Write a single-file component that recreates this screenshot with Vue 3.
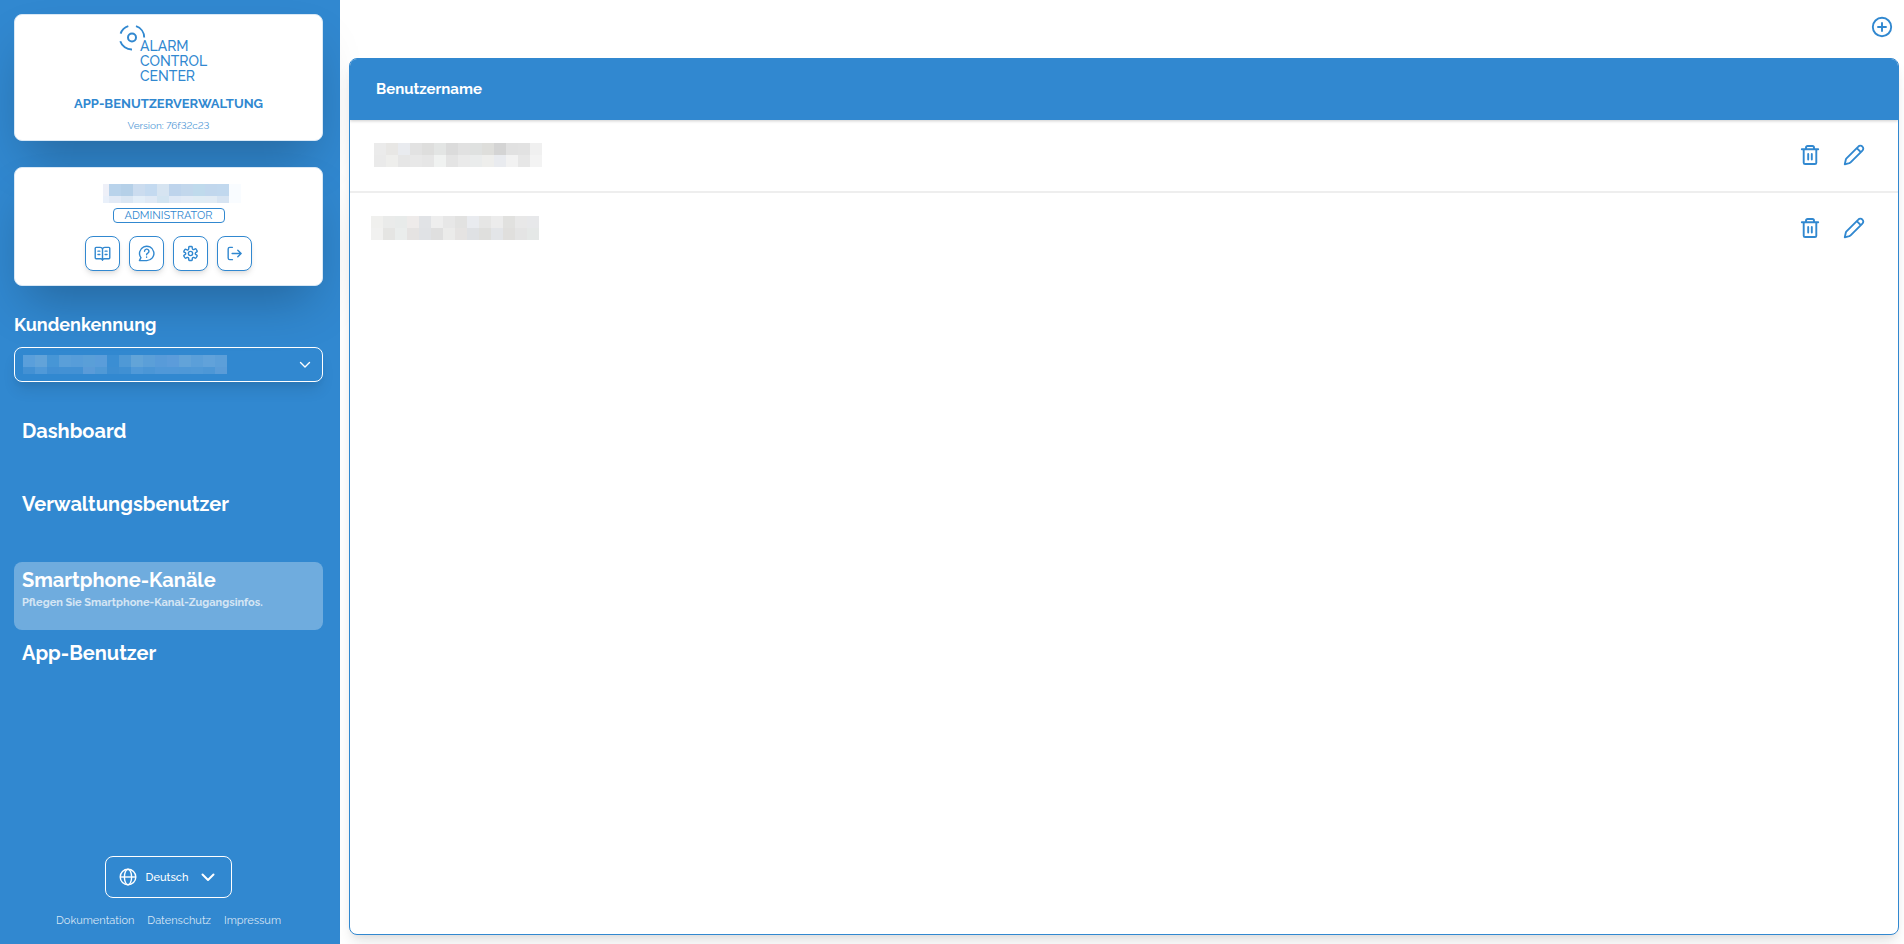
<script setup>
import { h, ref } from 'vue'

const CELL = 12

// Draws a redacted text as rows of coloured blocks.
const Mosaic = (props) => {
  const rows = props.rows.map((r) => r.split(' '))
  const lead = props.lead || CELL
  const tail = props.tail || CELL
  const width = lead + CELL * (rows[0].length - 1)
  const height = CELL * (rows.length - 1) + tail
  const rects = rows.flatMap((cells, y) =>
    cells.map((c, x) =>
      h('rect', {
        x: x === 0 ? 0 : lead + (x - 1) * CELL,
        y: y * CELL,
        width: x === 0 ? lead : CELL,
        height: y === rows.length - 1 ? tail : CELL,
        fill: '#' + c
      })
    )
  )
  return h('svg', { width, height, 'aria-hidden': 'true', 'shape-rendering': 'crispEdges' }, rects)
}
Mosaic.props = ['rows', 'lead', 'tail']

const userName = [
  'eef0f8 b9d3eb b5d0e8 cbdcef c4daf0 d6e4f1 bed4ec c2d7ec bfdaec c1d7ed c1d8ee f9fcff',
  'e9f0fa e2eaf6 dae6f3 e3eef8 dfe9f5 d2e4f1 dfe9f6 e2ebf6 e0ecf4 e1ebf4 d7e4f2 f9fcff'
]
const customer = [
  '5a9fdb 62a3d9 4796d6 5a9fd9 579dd9 5a9fd8 5a9dda 3b8ed3 4f99d6 62a4d8 5b9fd8 589bd9 5c9cda 62a3d9 5b9fd9 61a2da 5c9fd9',
  '4391d4 5099d8 4290d4 4391d4 4391d4 5a9bd8 5099d6 3d8ed2 4090d3 5099d8 4b96d6 5098d8 5098d8 4f98d7 5099d7 4d97d6 5a9cd8'
]
const channels = [
  {
    id: 1,
    name: [
      'ebebeb e8e7e5 e9ebef e2e2e2 dededd e3e5e4 dbdbdb e1e1e1 dfe1e0 dededb d4d4d4 e1e1e1 e2e2e2 f0f0f0',
      'eaeaea eeeeec e6e6e6 e8e8e8 e6e6e6 f0f2f1 e4e4e4 eaeaea eaecec eeeeec e9ebef f2f2f2 e7e7e7 f3f3f3'
    ]
  },
  {
    id: 2,
    name: [
      'f0f0ee eaebea e8ebea eeebea e1e3e6 eeeeee e7e7e7 e2e2e1 e9ebef e6e6e5 ececec e1e1df e8e8e8 e7e8ea',
      'f1f1f0 e5e5e3 eaedec e5e3e2 e0e2e5 dfdfdf ebebea e5e3e2 dfe1e4 dfdfdd e3e5e8 e0dfdd e4e4e4 e5e8e7'
    ]
  }
]

const navGroups = [
  [{ title: 'Dashboard' }, { title: 'Verwaltungsbenutzer' }],
  [
    { title: 'Smartphone-Kanäle', text: 'Pflegen Sie Smartphone-Kanal-Zugangsinfos.' },
    { title: 'App-Benutzer' }
  ]
]
const active = ref('Smartphone-Kanäle')
const footerLinks = ['Dokumentation', 'Datenschutz', 'Impressum']
</script>

<template>
  <div class="app">
    <aside class="sidebar">
      <section class="card brand">
        <svg class="logo" width="90" height="60" viewBox="0 0 90 60" role="img" aria-label="Alarm Control Center">
          <g fill="none" stroke="currentColor">
            <circle cx="13" cy="13.500" r="4" stroke-width="2" />
            <path d="M1.600 9.600A12 12 0 0 1 9.300 2.100M17 2.200A12 12 0 0 1 25.200 13.500M1.300 17.200A12 12 0 0 0 13 25.500" stroke-width="1.900" />
          </g>
          <g class="logo-text">
            <text x="21" y="27">ALARM</text>
            <text x="21" y="42">CONTROL</text>
            <text x="21" y="57">CENTER</text>
          </g>
        </svg>
        <h1>APP-BENUTZERVERWALTUNG</h1>
        <p class="version">Version: 76f32c23</p>
      </section>

      <section class="card account">
        <Mosaic class="user" :rows="userName" :lead="6" :tail="7" />
        <span class="role">ADMINISTRATOR</span>
        <div class="actions">
          <button type="button" aria-label="Handbuch">
            <svg class="ico" viewBox="0 0 18 18">
              <path d="M9 4.200C8.600 3 7.800 2.500 6.500 2.500H2.200a.9.9 0 0 0-.9.9v10.200c0 .5.400.9.900.9h4.600c1.200 0 2.200.6 2.200 1.700 0-1.100 1-1.700 2.200-1.700h4.600c.5 0 .9-.4.900-.9V3.400a.9.9 0 0 0-.9-.9h-4.300C10.200 2.500 9.400 3 9 4.200zM9 4.200v12M4.200 6.500h2M4.200 10h2M11.800 6.500h2M11.800 10h2" />
            </svg>
          </button>
          <button type="button" aria-label="Hilfe">
            <svg class="ico" viewBox="0 0 18 18">
              <path d="M1.500 16.500l1.600-3.100A7.600 7.600 0 1 1 9.300 16.500z" />
              <path d="M6.900 6.700a2.300 2.300 0 1 1 3.400 2c-.8.500-1.200.8-1.200 1.600M9.100 12.600v.3" />
            </svg>
          </button>
          <button type="button" aria-label="Einstellungen">
            <svg class="ico" viewBox="0 0 24 24">
              <path class="gear" d="M9.600 3c.1-.5.600-.9 1.100-.9h2.600c.5 0 1 .4 1.100.9l.2 2.200c.1.400.3.700.6.900l.3.200c.3.200.7.200 1.100.1l2-.9c.5-.2 1.100 0 1.400.5l1.300 2.200c.3.500.2 1.100-.3 1.400l-1.800 1.200c-.3.300-.4.600-.4 1v.4c0 .4.100.7.400 1l1.800 1.200c.4.400.5 1 .3 1.400l-1.300 2.200c-.3.500-.9.700-1.400.5l-2-.9c-.4-.1-.8-.1-1.100.1l-.3.200c-.3.200-.5.500-.6.900l-.2 2.200c-.1.500-.6.900-1.100.9h-2.600c-.5 0-1-.4-1.100-.9l-.2-2.200c-.1-.4-.3-.7-.6-.9l-.3-.2c-.3-.2-.7-.2-1.100-.1l-2 .9c-.5.200-1.100 0-1.400-.5l-1.300-2.200c-.3-.5-.2-1.100.3-1.400l1.800-1.200c.3-.3.400-.6.400-1v-.4c0-.4-.1-.7-.4-1L3 10.200c-.4-.4-.5-1-.3-1.400L4 6.600c.3-.5.900-.7 1.400-.5l2 .9c.4.100.8.100 1.100-.1l.3-.2c.3-.2.500-.5.600-.9zM15 12a3 3 0 1 1-6 0 3 3 0 0 1 6 0z" />
            </svg>
          </button>
          <button type="button" aria-label="Abmelden">
            <svg class="ico" viewBox="0 0 18 18">
              <path d="M6.800 2.500H4A1.700 1.700 0 0 0 2.300 4.200v9.600A1.700 1.700 0 0 0 4 15.500h2.800M6.500 9H16M12.500 5.500L16 9l-3.500 3.500" />
            </svg>
          </button>
        </div>
      </section>

      <label class="customer-label" for="customer">Kundenkennung</label>
      <div class="customer">
        <select id="customer">
          <option value="1"></option>
        </select>
        <Mosaic class="customer-value" :rows="customer" :tail="7" />
        <svg class="customer-arrow" width="12" height="8" viewBox="0 0 12 8" aria-hidden="true">
          <path d="M1.500 1.500L6 6l4.500-4.500" />
        </svg>
      </div>

      <nav>
        <ul v-for="(group, i) in navGroups" :key="i">
          <li v-for="item in group" :key="item.title">
            <a href="#" :class="{ active: item.title === active }" @click.prevent="active = item.title">
              <span class="nav-title">{{ item.title }}</span>
              <span v-if="item.text" class="nav-text">{{ item.text }}</span>
            </a>
          </li>
        </ul>
      </nav>

      <footer>
        <button type="button" class="language">
          <svg width="18" height="18" viewBox="0 0 18 18" aria-hidden="true">
            <g fill="none" stroke="currentColor" stroke-width="1.400">
              <circle cx="9" cy="9" r="7.800" />
              <ellipse cx="9" cy="9" rx="3.600" ry="7.800" />
              <path d="M1.200 9h15.600" />
            </g>
          </svg>
          <span>Deutsch</span>
          <svg width="14" height="9" viewBox="0 0 14 9" aria-hidden="true">
            <path d="M1.500 1.500L7 7l5.500-5.500" fill="none" stroke="currentColor" stroke-width="2" stroke-linecap="round" stroke-linejoin="round" />
          </svg>
        </button>
        <div class="links">
          <a v-for="l in footerLinks" :key="l" href="#">{{ l }}</a>
        </div>
      </footer>
    </aside>

    <main>
      <div class="toolbar">
        <button type="button" class="icon-button" aria-label="Hinzufügen">
          <svg class="big" viewBox="0 0 24 24">
            <circle cx="12" cy="12" r="9.200" />
            <path d="M12 8v8M8 12h8" />
          </svg>
        </button>
      </div>
      <div class="panel">
        <table>
          <thead>
            <tr>
              <th scope="col">Benutzername</th>
              <th></th>
            </tr>
          </thead>
          <tbody>
            <tr v-for="c in channels" :key="c.id">
              <td class="name"><Mosaic :rows="c.name" /></td>
              <td>
                <div class="row-actions">
                  <button type="button" class="icon-button" aria-label="Löschen">
                    <svg class="big" viewBox="0 0 24 24">
                      <path d="M3.800 6.300h16.400M5.700 6.300v13.400c0 .8.600 1.300 1.400 1.300h9.800c.8 0 1.400-.5 1.400-1.300V6.300M8 6.300V4.600C8 3.700 8.700 3 9.600 3h4.800c.9 0 1.600.7 1.600 1.600v1.700M10.200 11v5.500M13.800 11v5.500" />
                    </svg>
                  </button>
                  <button type="button" class="icon-button" aria-label="Bearbeiten">
                    <svg class="big" viewBox="0 0 24 24">
                      <path d="M2.800 21.300l1-4.700c.1-.5.300-.9.700-1.300L16.300 3.600a2.700 2.700 0 0 1 4.100 0 2.700 2.700 0 0 1 0 4L8.600 19.400c-.4.400-.8.600-1.300.8zM14.800 5.200l4 4" />
                    </svg>
                  </button>
                </div>
              </td>
            </tr>
          </tbody>
        </table>
      </div>
    </main>
  </div>
</template>

<style>
body {
  margin: 0;
  background: #fff;
}
</style>

<style scoped>
.app {
  --blue: #3188d0;
  display: flex;
  min-height: 100vh;
  font-family: Raleway, Lato, sans-serif;
  font-variant-numeric: lining-nums;
  color: var(--blue);
}
.app * {
  box-sizing: border-box;
}
button {
  font: inherit;
  color: inherit;
  padding: 0;
  cursor: pointer;
}
svg {
  display: block;
}
h1,
p,
ul {
  margin: 0;
  padding: 0;
}
.sidebar {
  flex: 0 0 340px;
  display: flex;
  flex-direction: column;
  padding: 14px 17px 13px 14px;
  background: var(--blue);
  color: #fff;
}
.card {
  display: flex;
  flex-direction: column;
  align-items: center;
  background: #fff;
  color: var(--blue);
  border: 1px solid #d9e8f5;
  border-radius: 8px;
  box-shadow: 0 25px 50px -12px rgba(0, 0, 0, 0.25);
}
.brand {
  height: 127px;
  padding-top: 9px;
}
.logo {
  margin-right: 10px;
}
.logo-text {
  font-size: 14px;
  font-weight: 500;
  fill: currentColor;
}
h1 {
  margin-top: 11px;
  font-size: 13px;
  line-height: 18px;
  font-weight: 700;
}
.version {
  margin-top: 5px;
  font-size: 10px;
  line-height: 16px;
  opacity: 0.85;
}
.account {
  margin-top: 26px;
  height: 119px;
  padding-top: 16px;
}
.user {
  margin-left: 6px;
}
.role {
  margin-top: 5px;
  padding: 0 11px;
  border: 1px solid var(--blue);
  border-radius: 4px;
  font-size: 11px;
  line-height: 13px;
}
.actions {
  display: flex;
  gap: 9px;
  margin-top: 13px;
}
.actions button {
  display: grid;
  place-items: center;
  width: 35px;
  height: 35px;
  background: #fff;
  border: 1px solid var(--blue);
  border-radius: 8px;
  box-shadow: 0 4px 6px -1px rgba(0, 0, 0, 0.1), 0 2px 4px -1px rgba(0, 0, 0, 0.06);
}
.ico,
.big {
  width: 17px;
  height: 17px;
  fill: none;
  stroke: currentColor;
  stroke-width: 1.5;
  stroke-linecap: round;
  stroke-linejoin: round;
}
.gear {
  stroke-width: 2;
}
.big {
  width: 24px;
  height: 24px;
  stroke-width: 1.900;
}
.customer-label {
  position: relative;
  margin-top: 27px;
  font-size: 18px;
  line-height: 24px;
  font-weight: 700;
}
.customer {
  position: relative;
  margin-top: 10px;
}
.customer select {
  display: block;
  width: 100%;
  height: 35px;
  appearance: none;
  background: transparent;
  border: 1px solid #fff;
  border-radius: 8px;
  box-shadow: 0 10px 15px -3px rgba(0, 0, 0, 0.1), 0 4px 6px -2px rgba(0, 0, 0, 0.05);
}
.customer-value {
  position: absolute;
  left: 9px;
  top: 8px;
  pointer-events: none;
}
.customer-arrow {
  position: absolute;
  right: 12px;
  top: 14px;
  pointer-events: none;
  fill: none;
  stroke: #fff;
  stroke-width: 1.400;
  stroke-linecap: round;
  stroke-linejoin: round;
}
nav {
  display: flex;
  flex-direction: column;
  gap: 8px;
  margin-top: 31px;
}
nav ul {
  display: flex;
  flex-direction: column;
  gap: 5px;
  list-style: none;
}
nav a {
  display: flex;
  flex-direction: column;
  height: 68px;
  padding: 5px 8px;
  border-radius: 8px;
  color: #fff;
  font-weight: 700;
  text-decoration: none;
}
nav a.active {
  background: rgba(255, 255, 255, 0.3);
}
.nav-title {
  font-size: 20px;
  line-height: 26px;
}
.nav-text {
  font-size: 11px;
  line-height: 20px;
  opacity: 0.7;
}
footer {
  display: flex;
  flex-direction: column;
  align-items: center;
  margin-top: auto;
}
.language {
  display: flex;
  align-items: center;
  gap: 9px;
  height: 42px;
  padding: 0 16px 0 13px;
  background: transparent;
  border: 1px solid #fff;
  border-radius: 8px;
  font-size: 11px;
  font-weight: 500;
}
.language span {
  margin-right: 4px;
}
.links {
  display: flex;
  gap: 13px;
  margin-top: 13px;
}
.links a {
  color: rgba(255, 255, 255, 0.8);
  font-size: 11px;
  line-height: 20px;
  text-decoration: none;
}
main {
  flex: 1;
  min-width: 0;
  display: flex;
  flex-direction: column;
  padding: 0 5px 9px 9px;
}
.toolbar {
  display: flex;
  justify-content: flex-end;
  height: 58px;
  padding: 15px 5px 0;
}
.icon-button {
  display: block;
  width: 24px;
  height: 24px;
  border: 0;
  background: none;
  color: var(--blue);
}
.panel {
  flex: 1;
  overflow: hidden;
  border: 1px solid var(--blue);
  border-radius: 8px;
  background: #fff;
  box-shadow: 0 10px 15px -3px rgba(0, 0, 0, 0.1), 0 4px 6px -2px rgba(0, 0, 0, 0.05);
}
table {
  width: 100%;
  border-collapse: collapse;
}
thead {
  background: var(--blue);
  color: #fff;
  box-shadow: 0 1px 3px rgba(0, 0, 0, 0.2);
}
th {
  height: 61px;
  padding: 0 26px 2px;
  text-align: left;
  font-size: 15px;
  font-weight: 700;
}
td {
  height: 72px;
  padding: 0 32px 2px 24px;
}
tbody tr:nth-child(even) .name {
  padding-left: 21px;
}
tbody tr:not(:last-child) {
  border-bottom: 2px solid #eee;
}
.row-actions {
  display: flex;
  justify-content: flex-end;
  gap: 20px;
}
</style>
